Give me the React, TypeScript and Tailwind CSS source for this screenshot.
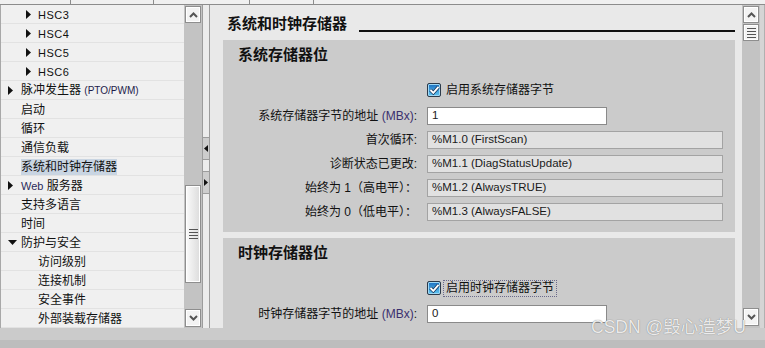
import React from "react";

const sans = "font-['Liberation_Sans','Noto_Sans_CJK_SC',sans-serif]";

type TreeItem = {
  label: React.ReactNode;
  level: 0 | 1;
  arrow?: "right" | "down";
  selected?: boolean;
};

const tree: TreeItem[] = [
  { label: <span className="text-[11px] tracking-[0.5px]">HSC3</span>, level: 1, arrow: "right" },
  { label: <span className="text-[11px] tracking-[0.5px]">HSC4</span>, level: 1, arrow: "right" },
  { label: <span className="text-[11px] tracking-[0.5px]">HSC5</span>, level: 1, arrow: "right" },
  { label: <span className="text-[11px] tracking-[0.5px]">HSC6</span>, level: 1, arrow: "right" },
  {
    label: (
      <>
        脉冲发生器 <span className="text-[10px] text-[#1c1c4a]">(PTO/PWM)</span>
      </>
    ),
    level: 0,
    arrow: "right",
  },
  { label: "启动", level: 0 },
  { label: "循环", level: 0 },
  { label: "通信负载", level: 0 },
  { label: "系统和时钟存储器", level: 0, selected: true },
  {
    label: (
      <>
        <span className="text-[11px] text-[#2a2a5a]">Web</span> 服务器
      </>
    ),
    level: 0,
    arrow: "right",
  },
  { label: "支持多语言", level: 0 },
  { label: "时间", level: 0 },
  { label: "防护与安全", level: 0, arrow: "down" },
  { label: "访问级别", level: 1 },
  { label: "连接机制", level: 1 },
  { label: "安全事件", level: 1 },
  { label: "外部装载存储器", level: 1 },
];

function Arrow({ dir }: { dir: "right" | "down" }) {
  if (dir === "down") {
    return (
      <svg width="9" height="5" viewBox="0 0 9 5">
        <polygon points="0,0 9,0 4.5,5" fill="#111" />
      </svg>
    );
  }
  return (
    <svg width="5" height="9" viewBox="0 0 5 9">
      <polygon points="0,0 5,4.5 0,9" fill="#111" />
    </svg>
  );
}

function TreeRow({ item }: { item: TreeItem }) {
  return (
    <div
      className={`h-[19px] shrink-0 flex items-center border-b border-[#e2e2e2] ${
        item.level === 0 ? "pl-[7px]" : "pl-[25px]"
      }`}
    >
      <div className="w-[12px] h-full flex items-center">
        {item.arrow && <Arrow dir={item.arrow} />}
      </div>
      <span
        className={`mt-[1px] text-[12px] leading-[16px] text-[#111] whitespace-nowrap ${
          item.level === 0 ? "ml-[1px]" : ""
        } ${item.selected ? "bg-[#c9d5e2]" : ""}`}
      >
        {item.label}
      </span>
    </div>
  );
}

function Chevron({ up }: { up: boolean }) {
  return (
    <svg width="9" height="6" viewBox="0 0 9 6">
      <path
        d={up ? "M1 5 L4.5 1.5 L8 5" : "M1 1 L4.5 4.5 L8 1"}
        stroke="#555"
        strokeWidth="2"
        fill="none"
      />
    </svg>
  );
}

function Grip() {
  return (
    <div className="flex flex-col gap-[2px]">
      <div className="w-[9px] h-px bg-[#555]" />
      <div className="w-[9px] h-px bg-[#555]" />
      <div className="w-[9px] h-px bg-[#555]" />
      <div className="w-[9px] h-px bg-[#555]" />
    </div>
  );
}

function ScrollButton({ children, h }: { children: React.ReactNode; h: string }) {
  return (
    <div
      className={`${h} w-full shrink-0 bg-[#f3f3f3] border border-[#8e8e8e] shadow-[inset_0_0_0_1px_#ffffff] flex items-center justify-center`}
    >
      {children}
    </div>
  );
}

function Checkbox() {
  return (
    <span className="w-[14px] h-[14px] shrink-0 rounded-[2px] border border-[#2c3a4a] bg-linear-to-b from-[#1b6fc0] to-[#5fc6f2] shadow-[inset_0_0_0_1px_#9fd8f5] flex items-center justify-center">
      <svg width="11" height="10" viewBox="0 0 11 10">
        <path d="M1.5 5 L4.3 7.8 L9.5 1.8" stroke="#12335a" strokeWidth="3.4" fill="none" />
        <path d="M1.5 5 L4.3 7.8 L9.5 1.8" stroke="#ffffff" strokeWidth="1.9" fill="none" />
      </svg>
    </span>
  );
}

function CheckRow({ label, focused }: { label: string; focused?: boolean }) {
  return (
    <div className="mt-[16px] h-[18px] flex items-center pl-[204px]">
      <Checkbox />
      <span
        className={`ml-[3px] px-[2px] text-[12px] leading-[15px] text-[#111] ${
          focused ? "outline outline-1 outline-dotted outline-[#6a6a8a]" : ""
        }`}
      >
        {label}
      </span>
    </div>
  );
}

function FieldRow({
  label,
  value,
  readOnly,
  first,
}: {
  label: React.ReactNode;
  value: string;
  readOnly?: boolean;
  first?: boolean;
}) {
  return (
    <div className={`${first ? "mt-[8px]" : "mt-[6px]"} h-[18px] flex items-center`}>
      <div className="w-[194px] text-right text-[12px] leading-[16px] text-[#111] whitespace-nowrap">
        {label}
      </div>
      <div
        className={`ml-[10px] h-[18px] flex items-center pl-[4px] text-[11.5px] text-[#1a1a1a] border ${
          readOnly
            ? "w-[296px] bg-[#e1e1e1] border-[#a3a3a3]"
            : "w-[180px] bg-white border-[#8a8a8a]"
        }`}
      >
        {value}
      </div>
    </div>
  );
}

const mbx = <span className="text-[#3a2f6e]">(MBx)</span>;

export default function App() {
  return (
    <div className={`relative w-[765px] h-[348px] flex flex-col bg-[#f0f0f0] overflow-hidden ${sans}`}>
      {/* tab strip */}
      <div className="h-[5px] shrink-0 flex border-b border-[#8c8c8c] bg-[#f0f0f0]">
        <div className="w-[71px] border-r border-[#8c8c8c]" />
        <div className="w-[83px] border-r border-[#8c8c8c]" />
        <div className="w-[96px] border-r border-[#8c8c8c]" />
        <div className="w-[64px] border-r border-[#8c8c8c]" />
      </div>

      <div className="h-[323px] shrink-0 flex">
        {/* project tree */}
        <div className="w-[184px] shrink-0 flex flex-col bg-[#f0f0f0] border-l border-[#a8a8a8] overflow-hidden">
          {tree.map((item, i) => (
            <TreeRow key={i} item={item} />
          ))}
        </div>

        {/* tree scrollbar */}
        <div className="w-[18px] shrink-0 bg-[#c3c3c3] px-[1px] flex flex-col">
          <div className="mt-[1px]" />
          <ScrollButton h="h-[17px]">
            <Chevron up />
          </ScrollButton>
          <div className="h-[162px] shrink-0" />
          <div className="h-[98px] shrink-0 border border-[#8e8e8e] bg-linear-to-r from-[#fafafa] to-[#dcdcdc] shadow-[inset_0_0_0_1px_#ffffff] flex items-center justify-center">
            <Grip />
          </div>
          <div className="flex-1" />
          <ScrollButton h="h-[18px]">
            <Chevron up={false} />
          </ScrollButton>
          <div className="mb-[1px]" />
        </div>

        {/* splitter */}
        <div className="w-[8px] shrink-0 bg-[#ececec] border-x border-[#9c9c9c] flex flex-col">
          <div className="h-[132px] shrink-0" />
          <div className="h-[23px] shrink-0 bg-[#cdcdcd] border-y border-[#9c9c9c] flex items-center justify-center">
            <svg width="4" height="7" viewBox="0 0 4 7">
              <polygon points="4,0 0,3.5 4,7" fill="#111" />
            </svg>
          </div>
          <div className="h-[11px] shrink-0" />
          <div className="h-[23px] shrink-0 bg-[#cdcdcd] border-y border-[#9c9c9c] flex items-center justify-center">
            <svg width="4" height="7" viewBox="0 0 4 7">
              <polygon points="0,0 4,3.5 0,7" fill="#111" />
            </svg>
          </div>
        </div>

        {/* properties */}
        <div className="flex-1 bg-[#e9e9e9] overflow-hidden flex flex-col">
          <div className="h-[35px] shrink-0 flex items-center pl-[17px] pr-[7px] pt-[3px]">
            <span className="text-[15px] leading-[20px] font-bold text-[#111] whitespace-nowrap">
              系统和时钟存储器
            </span>
            <div className="flex-1 h-[1.5px] bg-[#111] ml-[12px] mt-[14px]" />
          </div>

          <section className="ml-[13px] mr-[7px] h-[192px] shrink-0 bg-[#cbcbcb] pt-[5px]">
            <h3 className="pl-[15px] h-[20px] text-[15px] leading-[20px] font-bold text-[#111]">
              系统存储器位
            </h3>
            <CheckRow label="启用系统存储器字节" />
            <FieldRow first label={<>系统存储器字节的地址 {mbx}:</>} value="1" />
            <FieldRow readOnly label="首次循环:" value="%M1.0 (FirstScan)" />
            <FieldRow readOnly label="诊断状态已更改:" value="%M1.1 (DiagStatusUpdate)" />
            <FieldRow readOnly label="始终为 1（高电平）：" value="%M1.2 (AlwaysTRUE)" />
            <FieldRow readOnly label="始终为 0（低电平）：" value="%M1.3 (AlwaysFALSE)" />
          </section>

          <section className="mt-[6px] ml-[13px] mr-[7px] flex-1 bg-[#cbcbcb] pt-[5px]">
            <h3 className="pl-[15px] h-[20px] text-[15px] leading-[20px] font-bold text-[#111]">
              时钟存储器位
            </h3>
            <CheckRow label="启用时钟存储器字节" focused />
            <FieldRow first label={<>时钟存储器字节的地址 {mbx}:</>} value="0" />
          </section>
        </div>

        {/* properties scrollbar */}
        <div className="w-[18px] shrink-0 bg-[#c3c3c3] px-[1px] flex flex-col">
          <div className="mt-[1px]" />
          <ScrollButton h="h-[17px]">
            <Chevron up />
          </ScrollButton>
          <div className="mt-[1px]" />
          <ScrollButton h="h-[17px]">
            <Grip />
          </ScrollButton>
          <div className="flex-1" />
          <ScrollButton h="h-[18px]">
            <Chevron up={false} />
          </ScrollButton>
          <div className="mb-[2px]" />
        </div>
        <div className="w-[5px] shrink-0 bg-[#d5d5d5] border-r border-[#b0b0b0]" />
      </div>

      <div className="h-[12px] shrink-0 bg-[#cbcbcb]" />
      <div className="h-[8px] shrink-0 bg-[#bdbdbd]" />

      {/* watermark */}
      <div className="absolute left-[591px] top-[316px] text-[17.5px] leading-[22px] text-white/85 [text-shadow:0_0_1px_#666] whitespace-nowrap pointer-events-none">
        CSDN @毁心造梦U
      </div>
    </div>
  );
}
